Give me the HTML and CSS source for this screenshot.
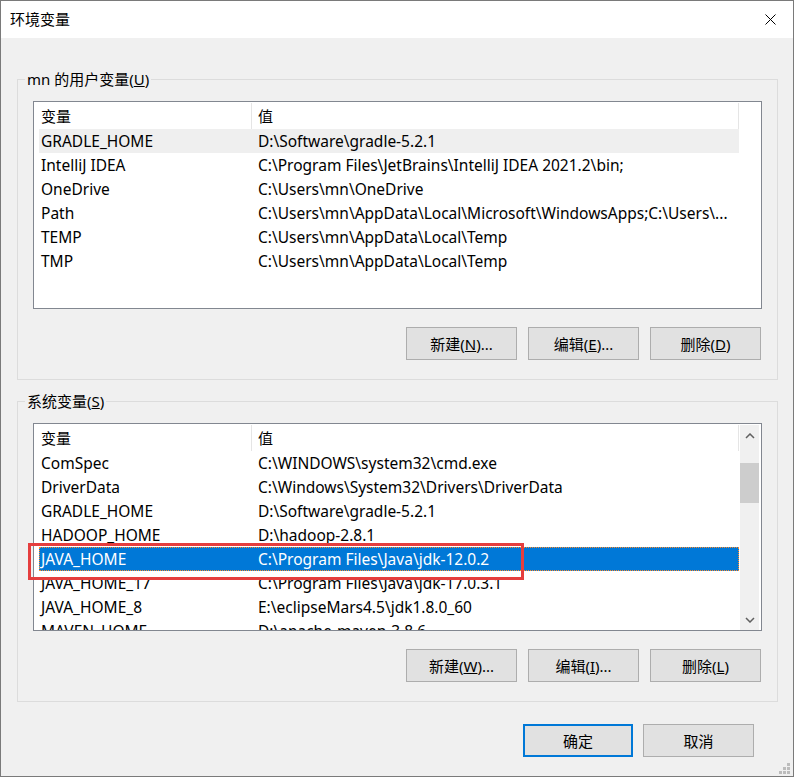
FILE: index.html
```html
<!DOCTYPE html>
<html lang="zh-CN">
<head>
<meta charset="utf-8">
<title>环境变量</title>
<link rel="stylesheet" href="styles.css">
</head>
<body>
<div class="window">
  <div class="titlebar">
    <span class="title">环境变量</span>
    <span class="close">
      <svg width="11" height="11" viewBox="0 0 11 11"><path d="M0.5 0.5 L10.5 10.5 M10.5 0.5 L0.5 10.5" stroke="#000" stroke-width="1" fill="none"/></svg>
    </span>
  </div>
  <div class="content">
    <fieldset class="group">
      <legend>mn 的用户变量(<u>U</u>)</legend>
      <div class="group-body">
        <div class="list">
          <div class="list-content">
            <div class="list-header">
              <div class="hcell c1">变量</div>
              <div class="hcell c2">值</div>
            </div>
            <div class="row hover"><div class="c1">GRADLE_HOME</div><div class="c2">D:\Software\gradle-5.2.1</div></div>
            <div class="row"><div class="c1">IntelliJ IDEA</div><div class="c2">C:\Program Files\JetBrains\IntelliJ IDEA 2021.2\bin;</div></div>
            <div class="row"><div class="c1">OneDrive</div><div class="c2">C:\Users\mn\OneDrive</div></div>
            <div class="row"><div class="c1">Path</div><div class="c2">C:\Users\mn\AppData\Local\Microsoft\WindowsApps;C:\Users\...</div></div>
            <div class="row"><div class="c1">TEMP</div><div class="c2">C:\Users\mn\AppData\Local\Temp</div></div>
            <div class="row"><div class="c1">TMP</div><div class="c2">C:\Users\mn\AppData\Local\Temp</div></div>
          </div>
          <div class="scroll-slot"></div>
        </div>
        <div class="buttons">
          <button class="btn">新建(<u>N</u>)...</button>
          <button class="btn">编辑(<u>E</u>)...</button>
          <button class="btn">删除(<u>D</u>)</button>
        </div>
      </div>
    </fieldset>
    <fieldset class="group">
      <legend>系统变量(<u>S</u>)</legend>
      <div class="group-body">
        <div class="list">
          <div class="list-content">
            <div class="list-header">
              <div class="hcell c1">变量</div>
              <div class="hcell c2">值</div>
            </div>
            <div class="row"><div class="c1">ComSpec</div><div class="c2">C:\WINDOWS\system32\cmd.exe</div></div>
            <div class="row"><div class="c1">DriverData</div><div class="c2">C:\Windows\System32\Drivers\DriverData</div></div>
            <div class="row"><div class="c1">GRADLE_HOME</div><div class="c2">D:\Software\gradle-5.2.1</div></div>
            <div class="row"><div class="c1">HADOOP_HOME</div><div class="c2">D:\hadoop-2.8.1</div></div>
            <div class="row selected"><div class="c1">JAVA_HOME</div><div class="c2">C:\Program Files\Java\jdk-12.0.2</div></div>
            <div class="row"><div class="c1">JAVA_HOME_17</div><div class="c2">C:\Program Files\Java\jdk-17.0.3.1</div></div>
            <div class="row"><div class="c1">JAVA_HOME_8</div><div class="c2">E:\eclipseMars4.5\jdk1.8.0_60</div></div>
            <div class="row"><div class="c1">MAVEN_HOME</div><div class="c2">D:\apache-maven-3.8.6</div></div>
          </div>
          <div class="scroll-slot">
            <div class="scrollbar">
              <div class="sb-arrow">
                <svg width="10" height="6" viewBox="0 0 10 6"><path d="M1 5 L5 1 L9 5" stroke="#606060" stroke-width="1.5" fill="none"/></svg>
              </div>
              <div class="sb-track"><div class="sb-thumb"></div></div>
              <div class="sb-arrow">
                <svg width="10" height="6" viewBox="0 0 10 6"><path d="M1 1 L5 5 L9 1" stroke="#606060" stroke-width="1.5" fill="none"/></svg>
              </div>
            </div>
          </div>
        </div>
        <div class="buttons">
          <button class="btn">新建(<u>W</u>)...</button>
          <button class="btn">编辑(<u>I</u>)...</button>
          <button class="btn">删除(<u>L</u>)</button>
        </div>
      </div>
    </fieldset>
    <div class="dialog-buttons">
      <button class="btn btn-default">确定</button>
      <button class="btn">取消</button>
    </div>
  </div>
  <div class="highlight-box"></div>
  <svg class="grip" width="11" height="11" viewBox="0 0 11 11">
    <rect x="8" y="0" width="3" height="3" fill="#bcbcbc"/>
    <rect x="4" y="4" width="3" height="3" fill="#bcbcbc"/>
    <rect x="8" y="4" width="3" height="3" fill="#bcbcbc"/>
    <rect x="0" y="8" width="3" height="3" fill="#bcbcbc"/>
    <rect x="4" y="8" width="3" height="3" fill="#bcbcbc"/>
    <rect x="8" y="8" width="3" height="3" fill="#bcbcbc"/>
  </svg>
</div>
</body>
</html>
```

FILE: styles.css
```css
* { box-sizing: border-box; }
html, body { margin: 0; padding: 0; }
body {
  width: 794px;
  height: 777px;
  overflow: hidden;
  font-family: "Noto Sans", "Noto Sans CJK SC", sans-serif;
  font-size: 15px;
  color: #000;
  background: #f0f0f0;
}
.window {
  position: relative;
  width: 794px;
  height: 777px;
  border: 1px solid #7a7a7a;
  background: #f0f0f0;
  display: flex;
  flex-direction: column;
}
.titlebar {
  flex: none;
  height: 37px;
  background: #fff;
  display: flex;
  align-items: center;
}
.title {
  flex: 1;
  padding-left: 9px;
  line-height: 37px;
}
.close {
  width: 45px;
  height: 37px;
  display: flex;
  align-items: center;
  justify-content: center;
}
.close svg { display: block; }
.content {
  padding: 31px 15px 0 16px;
}
.group {
  margin: 0;
  padding: 0;
  border: 1px solid #dcdcdc;
  min-width: 0;
}
.group + .group { margin-top: 11px; }
.group legend {
  margin-left: 7px;
  padding: 0 2px;
  line-height: 21px;
  height: 21px;
}
.group-body {
  padding: 11px 15px 19px 15px;
}
.list {
  height: 208px;
  border: 1px solid #828790;
  background: #fff;
  display: flex;
  padding: 0 2px 0 5px;
}
.list-content {
  width: 700px;
  flex: none;
  overflow: hidden;
}
.list-header {
  height: 27px;
  display: flex;
}
.hcell {
  height: 26px;
  margin-top: 1px;
  line-height: 26px;
  border-right: 1px solid #e5e5e5;
}
.c1 {
  width: 213px;
  flex: none;
  padding-left: 2px;
  white-space: nowrap;
  overflow: hidden;
}
.c2 {
  flex: 1;
  min-width: 0;
  padding-left: 6px;
  white-space: nowrap;
  overflow: hidden;
  text-overflow: ellipsis;
}
.row {
  height: 24px;
  line-height: 24px;
  display: flex;
  font-size: 15.5px;
}
.row.hover { background: #efefef; }
.row.selected {
  background: #0078d7;
  color: #fff;
  outline: 1px dotted #ff8a28;
  outline-offset: -1px;
}
.scroll-slot {
  width: 19px;
  flex: none;
  margin-left: 1px;
}
.scrollbar {
  margin-top: 1px;
  height: 205px;
  background: #f0f0f0;
  display: flex;
  flex-direction: column;
}
.sb-arrow {
  height: 21px;
  flex: none;
  display: flex;
  align-items: center;
  justify-content: center;
}
.sb-arrow svg { display: block; }
.sb-track { flex: 1; }
.sb-thumb {
  margin-top: 17px;
  height: 40px;
  background: #cdcdcd;
}
.buttons {
  display: flex;
  justify-content: flex-end;
  gap: 11px;
  margin-top: 18px;
  padding-right: 1px;
}
.btn {
  width: 111px;
  height: 33px;
  padding: 0;
  margin: 0;
  background: #e1e1e1;
  border: 1px solid #adadad;
  font: inherit;
  color: #000;
  display: flex;
  align-items: center;
  justify-content: center;
}
.btn-default {
  width: 110px;
  border: 2px solid #0078d7;
}
.dialog-buttons {
  display: flex;
  justify-content: flex-end;
  gap: 10px;
  margin-top: 22px;
  padding-right: 24px;
}
.highlight-box {
  position: absolute;
  left: 27px;
  top: 542px;
  width: 496px;
  height: 37px;
  border: 3px solid #e53e3e;
}
.grip {
  position: absolute;
  right: 3px;
  bottom: 2px;
}
```
